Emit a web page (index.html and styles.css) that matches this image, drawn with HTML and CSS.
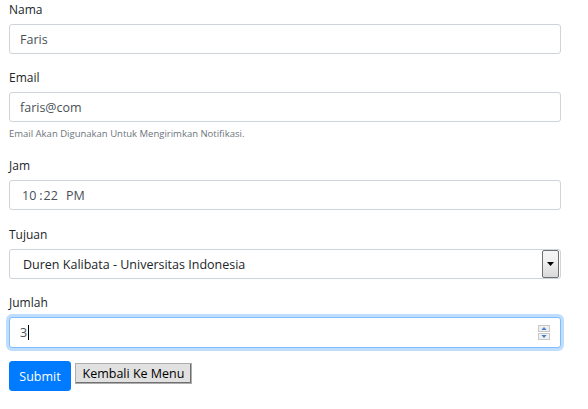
FILE: index.html
```html
<!DOCTYPE html>
<html lang="id">
<head>
<meta charset="utf-8">
<title>Form</title>
<link rel="stylesheet" href="styles.css">
</head>
<body>
<form class="form">
  <div class="group">
    <label class="label">Nama</label>
    <div class="control">Faris</div>
  </div>
  <div class="group">
    <label class="label">Email</label>
    <div class="control">faris@com</div>
    <small class="help">Email Akan Digunakan Untuk Mengirimkan Notifikasi.</small>
  </div>
  <div class="group group-time">
    <label class="label">Jam</label>
    <div class="control time"><span>10</span><span class="sep">:</span><span>22</span><span class="ampm">PM</span></div>
  </div>
  <div class="group">
    <label class="label">Tujuan</label>
    <div class="control select">
      <span class="select-text">Duren Kalibata - Universitas Indonesia</span>
      <span class="drop-btn"><svg width="7" height="4" viewBox="0 0 7 4"><path d="M0 0H7L3.5 4Z" fill="#000"/></svg></span>
    </div>
  </div>
  <div class="group group-number">
    <label class="label">Jumlah</label>
    <div class="control focus number">
      <span class="num-text">3<span class="caret"></span></span>
      <span class="spin">
        <span class="spin-btn"><svg width="7" height="4" viewBox="0 0 7 4"><path d="M0 4H7L3.5 0Z" fill="#4a7bc8"/></svg></span>
        <span class="spin-btn"><svg width="7" height="4" viewBox="0 0 7 4"><path d="M0 0H7L3.5 4Z" fill="#4a7bc8"/></svg></span>
      </span>
    </div>
  </div>
  <div class="actions">
    <button type="button" class="btn-primary">Submit</button>
    <button type="button" class="btn-classic">Kembali Ke Menu</button>
  </div>
</form>
</body>
</html>
```

FILE: styles.css
```css
html, body {
  margin: 0;
  padding: 0;
  background: #fff;
}
body {
  font-family: "Open Sans", "Noto Sans", sans-serif;
  font-size: 12px;
  color: #212529;
}
.form {
  width: 552px;
  margin-left: 9px;
}
.group {
  display: flex;
  flex-direction: column;
  margin-bottom: 14px;
}
.group-time {
  margin-bottom: 15px;
}
.group-number {
  margin-bottom: 13px;
}
.label {
  display: block;
  line-height: 19px;
  height: 19px;
  margin-bottom: 5px;
}
.control {
  box-sizing: border-box;
  height: 30px;
  border: 1px solid #ced4da;
  border-radius: 3px;
  padding: 0 10px;
  display: flex;
  align-items: center;
  color: #495057;
  font-size: 12.5px;
  background: #fff;
}
.help {
  display: block;
  margin-top: 4px;
  line-height: 16px;
  height: 16px;
  font-size: 9.5px;
  color: #6c757d;
}
.time {
  padding-left: 12px;
}
.time .sep {
  margin: 0 1px 0 3px;
}
.time .ampm {
  margin-left: 8px;
}
.select {
  padding: 0 1px 0 13px;
  color: #212529;
}
.select-text {
  flex: 1;
}
.drop-btn {
  box-sizing: border-box;
  width: 17px;
  height: 28px;
  border: 1px solid #707070;
  border-radius: 2px;
  background: linear-gradient(#f6f6f6, #f0f0f0 40%, #d9d9d9);
  display: flex;
  align-items: center;
  justify-content: center;
}
.focus {
  border-color: #80bdff;
  box-shadow: 0 0 0 3px rgba(0, 123, 255, 0.25);
}
.number {
  height: 31px;
  padding: 0 10px 0 10px;
}
.num-text {
  flex: 1;
  display: flex;
  align-items: center;
}
.caret {
  display: inline-block;
  width: 1px;
  height: 15px;
  background: #000;
  margin-left: 1px;
}
.spin {
  display: flex;
  flex-direction: column;
  gap: 1px;
}
.spin-btn {
  box-sizing: border-box;
  width: 12px;
  height: 7px;
  border: 1px solid #c8c8c8;
  background: #f0f0f0;
  display: flex;
  align-items: center;
  justify-content: center;
}
.spin-btn svg {
  width: 6px;
  height: 3px;
}
.actions {
  display: flex;
  align-items: flex-start;
  gap: 4px;
}
.btn-primary {
  box-sizing: border-box;
  height: 30px;
  width: 62px;
  border: 1px solid #007bff;
  border-radius: 3px;
  background: #007bff;
  color: #fff;
  font-family: "Open Sans", "Noto Sans", sans-serif;
  font-size: 12.5px;
  padding: 0;
}
.btn-classic {
  box-sizing: border-box;
  margin-top: 2px;
  height: 21px;
  width: 117px;
  border: 1px solid #adadad;
  border-radius: 0;
  background: #e1e1e1;
  color: #000;
  font-family: "Open Sans", "Noto Sans", sans-serif;
  font-size: 12.5px;
  padding: 0;
  box-shadow: inset -1px -1px 0 #707070;
}
```
